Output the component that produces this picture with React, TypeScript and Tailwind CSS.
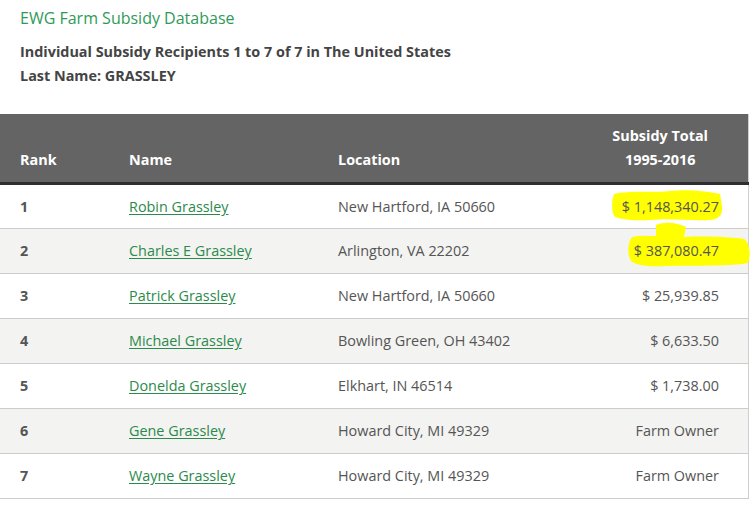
import React from 'react';

interface Recipient {
    rank: number
    name: string
    location: string
    total: string
    mark?: 1 | 2
}

const recipients: Recipient[] = [
    { rank: 1, name: "Robin Grassley", location: "New Hartford, IA 50660", total: "$ 1,148,340.27", mark: 1 },
    { rank: 2, name: "Charles E Grassley", location: "Arlington, VA 22202", total: "$ 387,080.47", mark: 2 },
    { rank: 3, name: "Patrick Grassley", location: "New Hartford, IA 50660", total: "$ 25,939.85" },
    { rank: 4, name: "Michael Grassley", location: "Bowling Green, OH 43402", total: "$ 6,633.50" },
    { rank: 5, name: "Donelda Grassley", location: "Elkhart, IN 46514", total: "$ 1,738.00" },
    { rank: 6, name: "Gene Grassley", location: "Howard City, MI 49329", total: "Farm Owner" },
    { rank: 7, name: "Wayne Grassley", location: "Howard City, MI 49329", total: "Farm Owner" },
];

// yellow highlighter scribbles over the first two totals
function Marker({ kind }: { kind: 1 | 2 }) {
    if (kind === 1) {
        return (
            <svg className="absolute left-[-12px] top-[-8px] w-[116px] h-[34px] pointer-events-none" viewBox="0 0 116 34">
                <path d="M4 6 C20 2 40 5 60 3 C80 1 100 4 110 6 L112 18 C113 26 110 31 100 32 C80 33 60 30 40 32 C20 33 8 31 4 28 C1 20 2 12 4 6 Z" fill="#ffff00" />
            </svg>
        );
    }
    return (
        <svg className="absolute left-[-8px] top-[-19px] w-[128px] h-[48px] pointer-events-none" viewBox="0 0 128 48">
            <path d="M30 4 C40 0 52 2 60 6 L58 16 C80 15 104 16 118 18 C124 22 125 34 122 42 C100 46 70 44 40 45 C20 46 6 44 4 38 C1 30 2 22 6 16 C14 14 22 15 30 15 Z" fill="#ffff00" />
        </svg>
    );
}

export default function App() {
    return (
        <div className="w-[751px] h-[522px] bg-white overflow-hidden" style={{ fontFamily: '"Open Sans", "Noto Sans", sans-serif' }}>
            <div className="px-5 pt-[6px]">
                <h1 className="text-[16px] leading-6 text-[#2f9a58]">EWG Farm Subsidy Database</h1>
                <div className="mt-[10px] text-[14.4px] leading-6 font-bold text-[#444]">
                    <p>Individual Subsidy Recipients 1 to 7 of 7 in The United States</p>
                    <p>Last Name: GRASSLEY</p>
                </div>
            </div>

            <table className="mt-[26px] w-[749px] border-collapse border-r border-[#d0d0d0] text-[14.4px] text-[#555]">
                <thead>
                    <tr className="bg-[#646464] text-white font-bold border-b-[3px] border-[#2e2e2e]">
                        <th className="w-[129px] pl-5 pb-[10px] pt-[10px] text-left align-bottom leading-6">Rank</th>
                        <th className="w-[209px] pb-[10px] text-left align-bottom leading-6">Name</th>
                        <th className="pb-[10px] text-left align-bottom leading-6">Location</th>
                        <th className="pr-[40px] pb-[10px] pt-[10px] text-right align-bottom leading-6">
                            <span className="inline-block text-center">Subsidy Total<br />1995-2016</span>
                        </th>
                    </tr>
                </thead>
                <tbody>
                    {recipients.map((r) => (
                        <tr key={r.rank} className={`h-[45px] border-b border-[#cccccc] ${r.rank % 2 === 0 ? 'bg-[#f3f3f1]' : 'bg-white'}`}>
                            <td className="pl-5 font-bold">{r.rank}</td>
                            <td><a href="#" className="text-[#2b8a4c] underline underline-offset-2">{r.name}</a></td>
                            <td>{r.location}</td>
                            <td className="pr-[29px] text-right">
                                <span className="relative inline-block">
                                    {r.mark && <Marker kind={r.mark} />}
                                    <span className="relative">{r.total}</span>
                                </span>
                            </td>
                        </tr>
                    ))}
                </tbody>
            </table>
        </div>
    );
}
